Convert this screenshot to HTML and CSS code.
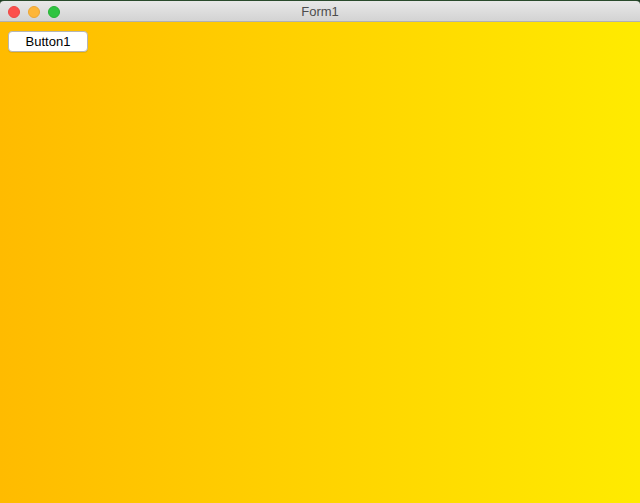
FILE: index.html
```html
<!DOCTYPE html>
<html>
<head>
<meta charset="utf-8">
<link rel="stylesheet" href="styles.css">
</head>
<body>
<div class="window">
  <div class="titlebar">
    <div class="lights">
      <span class="light red"></span>
      <span class="light yellow"></span>
      <span class="light green"></span>
    </div>
    <div class="title">Form1</div>
  </div>
  <div class="content">
    <button class="btn">Button1</button>
  </div>
</div>
</body>
</html>
```
FILE: styles.css
```css
html, body {
  margin: 0;
  padding: 0;
  width: 640px;
  height: 503px;
  overflow: hidden;
  background: #1d3b22;
}
.window {
  display: flex;
  flex-direction: column;
  width: 640px;
  height: 503px;
  font-family: "Liberation Sans", Arial, sans-serif;
}
.titlebar {
  position: relative;
  height: 22px;
  flex: none;
  box-sizing: border-box;
  border-top: 1px solid #2a4a2c;
  border-bottom: 1px solid #b1b1b1;
  background: linear-gradient(#e8e8e8, #d3d3d3);
  border-radius: 4px 4px 0 0;
  display: flex;
  align-items: center;
  justify-content: center;
}
.lights {
  position: absolute;
  left: 8px;
  top: 5px;
  display: flex;
  gap: 8px;
}
.light {
  width: 12px;
  height: 12px;
  border-radius: 50%;
  box-sizing: border-box;
}
.red { background: #fc4f4c; border: 1px solid #ec4845; }
.yellow { background: #fdb63a; border: 1px solid #eca635; }
.green { background: #2fc441; border: 1px solid #27b235; }
.title {
  font-size: 13px;
  color: #4d4d4d;
}
.content {
  flex: 1;
  background: linear-gradient(to right, #ffbb00, #ffeb00);
  padding: 9px 8px;
}
.btn {
  width: 80px;
  height: 21px;
  box-sizing: border-box;
  background: #fff;
  border: 1px solid #b5b5b5;
  border-radius: 4px;
  box-shadow: 0 1px 0 rgba(0, 0, 0, 0.08);
  font-family: "Liberation Sans", Arial, sans-serif;
  font-size: 13px;
  color: #000;
  padding: 0;
  line-height: 19px;
  display: block;
}
```
